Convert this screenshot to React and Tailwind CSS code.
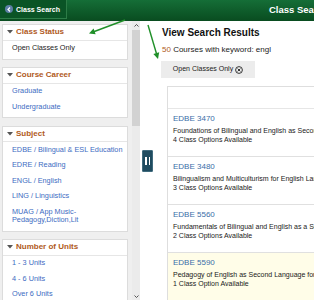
import React from "react";

function Tri() {
  return (
    <svg width="6" height="4" viewBox="0 0 6 4" className="shrink-0">
      <polygon points="0,0 6,0 3,3.5" fill="#555" />
    </svg>
  );
}

function Card({ title, children }) {
  return (
    <div className="bg-white border border-[#dcdcdc]">
      <div className="h-[15.5px] flex items-center pl-[4px] gap-[3px] border-b border-[#e6e6e6]">
        <Tri />
        <span className="text-[8px] font-bold text-[#b05a1c] leading-none">{title}</span>
      </div>
      <div className="pb-[2.5px]">{children}</div>
    </div>
  );
}

function Item({ children, link = true }) {
  return (
    <div
      className={`pl-[9px] py-[3.5px] text-[7.3px] leading-[8.5px] whitespace-nowrap ${
        link ? "text-[#3d6cc2]" : "text-[#222]"
      }`}
    >
      {children}
    </div>
  );
}

function Result({ code, desc, options, yellow }) {
  return (
    <div
      className={`h-[48px] border-b border-[#e0e0e0] pl-[5px] pt-[5px] whitespace-nowrap ${
        yellow ? "bg-[#fffde8]" : "bg-white"
      }`}
    >
      <div className="text-[8px] leading-[10px] text-[#3a6ea8]">{code}</div>
      <div className="mt-[2px] text-[7px] leading-[9px] text-[#1a1a1a]">{desc}</div>
      <div className="text-[7px] leading-[9px] text-[#1a1a1a]">{options}</div>
    </div>
  );
}

export default function App() {
  return (
    <div className="relative w-[314px] h-[300px] overflow-hidden bg-white font-['Liberation_Sans',Arial,sans-serif]">
      {/* Header */}
      <div className="h-[21px] bg-linear-to-b from-[#156e37] to-[#094c20] flex items-start whitespace-nowrap">
        <div className="h-[19px] w-[67px] shrink-0 bg-[#0a5426] border-r border-b border-[#2d7c47] flex items-center pl-[5px] gap-[3px]">
          <span className="w-[8px] h-[8px] rounded-full bg-[#5d7fa6] flex items-center justify-center">
            <svg width="4" height="5" viewBox="0 0 4 5">
              <polyline points="3,0.5 1,2.5 3,4.5" fill="none" stroke="white" strokeWidth="1.2" />
            </svg>
          </span>
          <span className="text-[7px] font-bold text-white leading-none">Class Search</span>
        </div>
        <div className="ml-[202px] h-[19px] flex items-center text-[9.5px] font-bold text-white leading-none shrink-0">
          Class Search
        </div>
      </div>

      {/* Body */}
      <div className="flex h-[279px]">
        {/* Left filters */}
        <div className="w-[132px] shrink-0 bg-[#efefef] pt-[3px] pl-[2px] pr-[4px] flex flex-col gap-[7.5px] overflow-hidden">
          <Card title="Class Status">
            <Item link={false}>Open Classes Only</Item>
          </Card>
          <Card title="Course Career">
            <Item>Graduate</Item>
            <Item>Undergraduate</Item>
          </Card>
          <Card title="Subject">
            <Item>EDBE / Bilingual &amp; ESL Education</Item>
            <Item>EDRE / Reading</Item>
            <Item>ENGL / English</Item>
            <Item>LING / Linguistics</Item>
            <Item>
              MUAG / App Music-
              <br />
              Pedagogy,Diction,Lit
            </Item>
          </Card>
          <Card title="Number of Units">
            <Item>1 - 3 Units</Item>
            <Item>4 - 6 Units</Item>
            <Item>Over 6 Units</Item>
          </Card>
        </div>

        {/* Scrollbar */}
        <div className="w-[8px] shrink-0 bg-[#ebebeb] flex flex-col">
          <div className="h-[9px] flex items-center justify-center">
            <svg width="5" height="3" viewBox="0 0 5 3">
              <polyline points="0.5,2.5 2.5,0.5 4.5,2.5" fill="none" stroke="#444" strokeWidth="0.9" />
            </svg>
          </div>
          <div className="h-[96px] bg-[#d2d2d2]" />
          <div className="flex-1" />
          <div className="h-[8px] flex items-center justify-center">
            <svg width="5" height="3" viewBox="0 0 5 3">
              <polyline points="0.5,0.5 2.5,2.5 4.5,0.5" fill="none" stroke="#444" strokeWidth="0.9" />
            </svg>
          </div>
        </div>

        {/* Splitter */}
        <div className="w-[13px] shrink-0 bg-white pl-[2px]">
          <div className="mt-[129px] w-[11px] h-[22px] bg-[#1f4b5f] border border-[#3f6a7d] rounded-[1px] flex items-center justify-center gap-[2px]">
            <span className="w-[1.5px] h-[8px] bg-white" />
            <span className="w-[1.5px] h-[8px] bg-white" />
          </div>
        </div>

        {/* Results */}
        <div className="flex-1 min-w-0 overflow-hidden pl-[9px] pt-[6px] whitespace-nowrap">
          <div className="text-[10px] leading-[12px] font-bold text-[#111]">View Search Results</div>
          <div className="mt-[6px] text-[8px] leading-[10px] text-[#1a1a1a]">
            <span className="text-[#b05a1c]">50</span> Courses with keyword: engl
          </div>
          <div className="mt-[6px] -ml-[1px] w-[94px] h-[17px] bg-[#ececec] flex items-center justify-center gap-[2px] text-[7px] text-[#222]">
            <span>Open Classes Only</span>
            <svg width="8" height="8" viewBox="0 0 8 8">
              <circle cx="4" cy="4" r="3.4" fill="none" stroke="#222" strokeWidth="0.9" />
              <line x1="2.6" y1="2.6" x2="5.4" y2="5.4" stroke="#222" strokeWidth="0.9" />
              <line x1="5.4" y1="2.6" x2="2.6" y2="5.4" stroke="#222" strokeWidth="0.9" />
            </svg>
          </div>
          <div className="mt-[8px] ml-[5px] w-[300px] border-l border-t border-[#dedede]">
            <div className="h-[22px] border-b border-[#e6e6e6]" />
            <Result
              code="EDBE 3470"
              desc="Foundations of Bilingual and English as Second Language Education"
              options="4 Class Options Available"
            />
            <Result
              code="EDBE 3480"
              desc="Bilingualism and Multiculturism for English Language Learners"
              options="3 Class Options Available"
            />
            <Result
              code="EDBE 5560"
              desc="Fundamentals of Bilingual and English as a Second Language"
              options="2 Class Options Available"
            />
            <Result
              code="EDBE 5590"
              desc="Pedagogy of English as Second Language for Content Areas"
              options="1 Class Option Available"
              yellow
            />
          </div>
        </div>
      </div>

      {/* Annotation arrows */}
      <svg className="absolute inset-0 pointer-events-none" width="314" height="300" viewBox="0 0 314 300">
        <line x1="125" y1="20" x2="93" y2="32" stroke="#1f8f28" strokeWidth="1.4" />
        <polygon points="89,33.5 95.65,34.21 93.55,28.59" fill="#1f8f28" />
        <line x1="148" y1="25" x2="156.6" y2="54" stroke="#1f8f28" strokeWidth="1.4" />
        <polygon points="158,59 159.2,52.35 153.4,54.05" fill="#1f8f28" />
      </svg>
    </div>
  );
}
